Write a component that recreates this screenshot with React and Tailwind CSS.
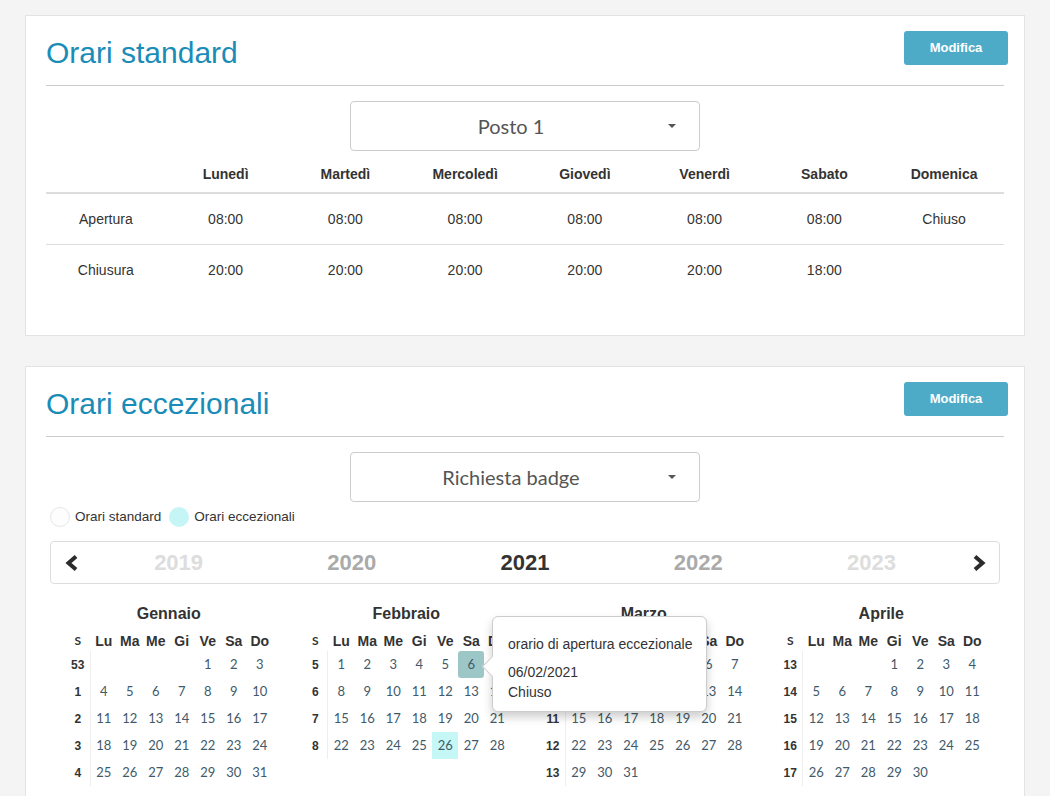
import React from "react";

const days = ["Lunedì", "Martedì", "Mercoledì", "Giovedì", "Venerdì", "Sabato", "Domenica"];
const apertura = ["08:00", "08:00", "08:00", "08:00", "08:00", "08:00", "Chiuso"];
const chiusura = ["20:00", "20:00", "20:00", "20:00", "20:00", "18:00", ""];

const months = [
  { name: "Gennaio", offset: 4, days: 31, weeks: [53, 1, 2, 3, 4] },
  { name: "Febbraio", offset: 0, days: 28, weeks: [5, 6, 7, 8], marked: { 6: "sel", 26: "exc" } },
  { name: "Marzo", offset: 0, days: 31, weeks: [9, 10, 11, 12, 13] },
  { name: "Aprile", offset: 3, days: 30, weeks: [13, 14, 15, 16, 17] },
];

const short = ["Lu", "Ma", "Me", "Gi", "Ve", "Sa", "Do"];

function PanelHeader({ title }) {
  return (
    <>
      <div className="flex items-start justify-between">
        <h2 className="mt-[4px] text-[30px] leading-[35px] font-normal text-[#1a8cb8]">{title}</h2>
        <button className="-mr-[4px] h-[34px] w-[104px] rounded-[3px] bg-[#4eabc7] text-[13px] font-bold text-white">
          Modifica
        </button>
      </div>
      <hr className="mt-[15px] border-0 border-t border-[#cccccc]" />
    </>
  );
}

function Select({ label }) {
  return (
    <div className="mx-auto mt-[15px] flex h-[50px] w-[350px] items-center rounded-[4px] border border-[#cccccc] bg-white pl-3">
      <span className="flex-1 text-center font-['Lato',sans-serif] text-[20px] text-[#555]">{label}</span>
      <span className="flex w-[40px] justify-start pl-[9px]">
        <svg width="8" height="4" viewBox="0 0 8 4">
          <path d="M0 0h8L4 4z" fill="#555" />
        </svg>
      </span>
    </div>
  );
}

function Chevron({ dir }) {
  return (
    <svg width="16" height="16" viewBox="0 0 16 16">
      <polyline
        points={dir === "left" ? "12,1.5 4.5,8 12,14.5" : "4,1.5 11.5,8 4,14.5"}
        fill="none"
        stroke="#2b2b2b"
        strokeWidth="4"
        strokeLinejoin="miter"
      />
    </svg>
  );
}

function Month({ m }) {
  return (
    <div className="mx-auto w-[208px]">
      <div className="h-[22px] text-center text-[16px] leading-[22px] font-bold text-[#333]">{m.name}</div>
      <div className="mt-[6px] flex h-[20px] items-center text-[#333]">
        <div className="w-[26px] text-center font-['Lato',sans-serif] text-[12px] font-bold">S</div>
        {short.map((d) => (
          <div key={d} className="w-[26px] text-center text-[14px] font-bold">
            {d}
          </div>
        ))}
      </div>
      {m.weeks.map((w, wi) => (
        <div key={w + "-" + wi} className="flex h-[27px] items-center">
          <div className="w-[26px] text-center text-[12px] font-bold text-[#333]">{w}</div>
          <div className="-ml-px flex h-full border-l border-[#eeeeee]">
            {short.map((_, i) => {
              const d = wi * 7 + i - m.offset + 1;
              const valid = d >= 1 && d <= m.days;
              const mark = valid && m.marked ? m.marked[d] : null;
              const bg =
                mark === "sel" ? "bg-[#9dc6c7] rounded-[3px]" : mark === "exc" ? "bg-[#c6f7f7]" : "";
              return (
                <div
                  key={i}
                  className={`flex h-[27px] w-[26px] items-center justify-center font-['Lato',sans-serif] text-[13px] text-[#3f5a6a] ${bg}`}
                >
                  {valid ? d : ""}
                </div>
              );
            })}
          </div>
        </div>
      ))}
    </div>
  );
}

export default function App() {
  return (
    <div className="min-h-screen bg-[#f4f4f4] pt-[15px] font-['Liberation_Sans',Arial,sans-serif] text-[#333]">
      <div className="ml-[25px] flex w-[1000px] flex-col gap-[30px]">
        <section className="border border-[#e3e3e3] bg-white px-5 pt-[15px] pb-10">
          <PanelHeader title="Orari standard" />
          <Select label="Posto 1" />
          <div className="mt-[5px] grid h-[38px] grid-cols-8 items-center border-b-2 border-[#dddddd] text-[14px] font-bold">
            <div />
            {days.map((d) => (
              <div key={d} className="text-center">
                {d}
              </div>
            ))}
          </div>
          <div className="grid h-[51px] grid-cols-8 items-center border-b border-[#dddddd] text-[14px]">
            <div className="text-center">Apertura</div>
            {apertura.map((v, i) => (
              <div key={i} className="text-center">
                {v}
              </div>
            ))}
          </div>
          <div className="grid h-[50px] grid-cols-8 items-center text-[14px]">
            <div className="text-center">Chiusura</div>
            {chiusura.map((v, i) => (
              <div key={i} className="text-center">
                {v}
              </div>
            ))}
          </div>
        </section>

        <section className="border border-[#e3e3e3] bg-white px-5 pt-[15px] pb-10">
          <PanelHeader title="Orari eccezionali" />
          <Select label="Richiesta badge" />
          <div className="mt-[5px] ml-1 flex h-[20px] items-center gap-[8px] text-[13.5px]">
            <div className="flex items-center gap-[5px]">
              <span className="h-[20px] w-[20px] rounded-full border border-[#e6e6e6] bg-[#fdfdfd]" />
              <span>Orari standard</span>
            </div>
            <div className="flex items-center gap-[5px]">
              <span className="h-[20px] w-[20px] rounded-full bg-[#c6f5f5]" />
              <span>Orari eccezionali</span>
            </div>
          </div>
          <div className="mx-1 mt-[14px] flex h-[43px] items-center rounded-[4px] border border-[#dddddd]">
            <div className="flex w-[41px] justify-center">
              <Chevron dir="left" />
            </div>
            {[
              ["2019", "text-[#dddddd]"],
              ["2020", "text-[#aaaaaa]"],
              ["2021", "text-[#333333]"],
              ["2022", "text-[#aaaaaa]"],
              ["2023", "text-[#dddddd]"],
            ].map(([y, c]) => (
              <div key={y} className={`flex-1 text-center text-[22px] font-bold ${c}`}>
                {y}
              </div>
            ))}
            <div className="flex w-[41px] justify-center">
              <Chevron dir="right" />
            </div>
          </div>
          <div className="relative mx-1 mt-[19px] grid grid-cols-4">
            {months.map((m) => (
              <Month key={m.name} m={m} />
            ))}
            <div className="absolute top-[13px] left-[442px] w-[215px] rounded-[6px] border border-[#cccccc] bg-white px-[15px] pt-[17px] pb-[9px] text-[14px] leading-[20px] whitespace-nowrap text-[#333] shadow-[0_5px_10px_rgba(0,0,0,0.2)]">
              <div className="absolute top-[42px] -left-[8px] h-[15px] w-[15px] rotate-45 border-b border-l border-[#cccccc] bg-white" />
              <div>orario di apertura eccezionale</div>
              <div className="mt-[8px]">06/02/2021</div>
              <div>Chiuso</div>
            </div>
          </div>
        </section>
      </div>
    </div>
  );
}
